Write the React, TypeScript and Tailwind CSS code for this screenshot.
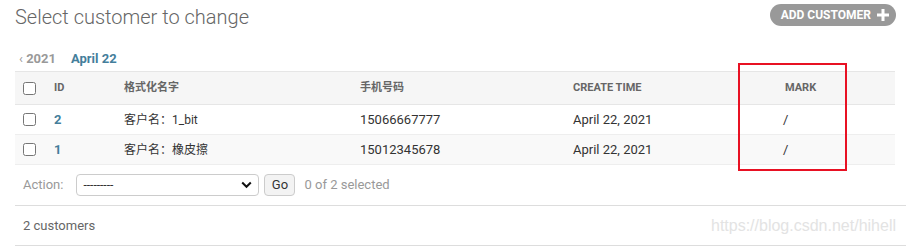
import React from 'react';

const rows = [
  { id: 2, name: '客户名：1_bit', phone: '15066667777', created: 'April 22, 2021', mark: '/' },
  { id: 1, name: '客户名：橡皮擦', phone: '15012345678', created: 'April 22, 2021', mark: '/' },
];

const font = { fontFamily: 'Roboto, "Noto Sans CJK SC", sans-serif' };

export default function App() {
  return (
    <div className="relative w-[906px] h-[250px] overflow-hidden bg-white text-[13px] text-[#333]" style={font}>
      <div className="flex items-start justify-between pl-[15px] pr-[10px] pt-[4px]">
        <h1 className="text-[20px] font-light leading-[26px] text-[#666]">Select customer to change</h1>
        <a className="flex h-[22px] items-center gap-[6px] rounded-full bg-[#999] pl-[11px] pr-[7px] text-[12px] font-bold leading-none text-white">
          ADD CUSTOMER
          <svg width="12" height="12" viewBox="0 0 12 12">
            <path d="M4.5 0h3v4.5H12v3H7.5V12h-3V7.5H0v-3h4.5z" fill="#fff" />
          </svg>
        </a>
      </div>

      <div className="ml-[15px] mr-[11px] mt-[20px]">
        <div className="flex h-[17px] items-center gap-[15px] pl-[4px] text-[13px] font-bold">
          <span className="text-[#999]"><span className="font-normal">‹ </span>2021</span>
          <span className="text-[#447e9b]">April 22</span>
        </div>

        <table className="mt-[4px] w-[880px] table-fixed border-collapse leading-[16px]">
          <colgroup>
            <col className="w-[31px]" />
            <col className="w-[70px]" />
            <col className="w-[236px]" />
            <col className="w-[213px]" />
            <col className="w-[212px]" />
            <col className="w-[118px]" />
          </colgroup>
          <thead>
            <tr className="h-[33px] border-y border-[#e6e6e6] bg-[#f6f6f6] text-left text-[11px] font-bold uppercase text-[#666]">
              <th className="pl-[8px]">
                <input type="checkbox" className="block h-[13px] w-[13px]" />
              </th>
              <th className="pl-[8px]">ID</th>
              <th className="pl-[8px]">格式化名字</th>
              <th className="pl-[8px]">手机号码</th>
              <th className="pl-[8px]">Create time</th>
              <th className="pl-[8px]">Mark</th>
            </tr>
          </thead>
          <tbody>
            {rows.map((r, i) => (
              <tr key={r.id} className={`h-[30px] border-b border-[#eee] ${i === 1 ? 'bg-[#f9f9f9]' : 'bg-white'}`}>
                <td className="pl-[8px]">
                  <input type="checkbox" className="block h-[13px] w-[13px]" />
                </td>
                <td className="pl-[8px] font-bold text-[#447e9b]">{r.id}</td>
                <td className="pl-[8px] text-[12px]">{r.name}</td>
                <td className="pl-[8px]">{r.phone}</td>
                <td className="pl-[8px]">{r.created}</td>
                <td className="pl-[6px]">{r.mark}</td>
              </tr>
            ))}
          </tbody>
        </table>
      </div>

      <div className="ml-[15px] flex h-[41px] items-center border-b border-[#ddd] pl-[8px] text-[13px] leading-[16px] text-[#999]">
        <span>Action:</span>
        <div className="ml-[13px] flex h-[22px] w-[183px] items-center justify-between rounded-[4px] border border-[#ccc] bg-white pl-[6px] pr-[6px] text-[#333]">
          <span className="text-[12px] leading-none">---------</span>
          <svg width="11" height="8" viewBox="0 0 11 8">
            <path d="M1.2 1.5l4.3 4.3 4.3-4.3" stroke="#111" strokeWidth="2" fill="none" />
          </svg>
        </div>
        <button className="ml-[5px] h-[22px] w-[31px] rounded-[4px] border border-[#ccc] bg-[#f3f3f3] text-[13px] text-[#333]">Go</button>
        <span className="ml-[9px]">0 of 2 selected</span>
      </div>

      <div className="ml-[15px] flex h-[40px] items-center justify-between border-b border-[#ddd] pl-[8px] pr-[10px] text-[13px] leading-[16px] text-[#666]">
        <span>2 customers</span>
        <span className="text-[16px] text-[#e3e3e3]" style={{ fontFamily: 'Arial, "Liberation Sans", sans-serif' }}>https://blog.csdn.net/hihell</span>
      </div>

      <div className="pointer-events-none absolute left-[738px] top-[63px] h-[108px] w-[109px] border-2 border-[#e81123]" />
    </div>
  );
}
